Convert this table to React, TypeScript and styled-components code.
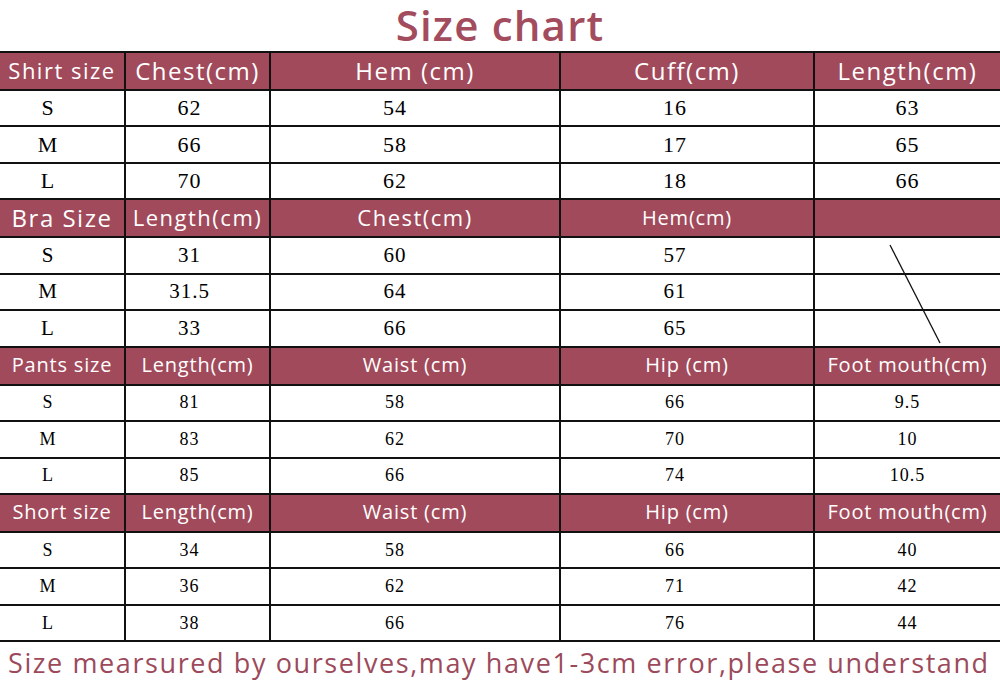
import React from 'react';
import styled, { createGlobalStyle } from 'styled-components';

const MAROON = '#a14a5b';

const GlobalStyle = createGlobalStyle`
  html, body {
    margin: 0;
    padding: 0;
    background: #ffffff;
  }
  body {
    font-family: 'Open Sans', 'Noto Sans', sans-serif;
    overflow: hidden;
  }
`;

const Styled = {
  Page: styled.main`
    width: 1000px;
    height: 700px;
    display: flex;
    flex-direction: column;
    background: #ffffff;
  `,
  Title: styled.h1`
    margin: -4px 0 -2px;
    text-align: center;
    font-family: 'Open Sans', sans-serif;
    font-size: 42px;
    font-weight: 600;
    letter-spacing: 1.2px;
    color: #a34c5e;
    line-height: normal;
  `,
  Table: styled.div`
    position: relative;
    display: flex;
    flex-direction: column;
    gap: 2px;
    padding: 2px 0;
    background: #111111;
  `,
  Section: styled.section`
    position: relative;
    display: grid;
    grid-template-columns: 124px 143px 288px 252px 185px;
    grid-template-rows: 36px repeat(3, 34.45px);
    gap: 2px;
  `,
  HeadCell: styled.div<{ $size: number }>`
    background: ${MAROON};
    color: #ffffff;
    display: flex;
    align-items: center;
    justify-content: center;
    white-space: nowrap;
    font-family: 'Open Sans', sans-serif;
    font-size: ${({ $size }) => $size}px;
    letter-spacing: ${({ $size }) => ($size > 21 ? 1.5 : 0.8)}px;
    padding-bottom: 2px;
  `,
  Cell: styled.div<{ $size: number; $nudge: number }>`
    background: #ffffff;
    color: #000000;
    display: flex;
    align-items: center;
    justify-content: center;
    font-family: 'Liberation Serif', 'DejaVu Serif', serif;
    font-size: ${({ $size }) => $size}px;
    letter-spacing: 1px;
    padding-right: ${({ $nudge }) => $nudge}px;
  `,
  Slash: styled.svg`
    position: absolute;
    left: 815px;
    top: 38px;
    width: 185px;
    height: 108px;
    pointer-events: none;
  `,
  Note: styled.p`
    margin: 0;
    padding: 2px 0 0 8px;
    font-family: 'Open Sans', sans-serif;
    font-size: 27px;
    letter-spacing: 1.6px;
    color: #9c4a5b;
    white-space: nowrap;
  `,
};

// offsets that pull each column's values a little left, as in the chart
const nudges = [28, 16, 40, 24, 0];

type SectionData = {
  title: string;
  heads: string[];
  headSizes: number[];
  rows: string[][];
  dataSize: number;
  slash?: boolean;
};

const sections: SectionData[] = [
  {
    title: 'Shirt size',
    heads: ['Chest(cm)', 'Hem (cm)', 'Cuff(cm)', 'Length(cm)'],
    headSizes: [22, 24, 24, 24, 24],
    rows: [
      ['S', '62', '54', '16', '63'],
      ['M', '66', '58', '17', '65'],
      ['L', '70', '62', '18', '66'],
    ],
    dataSize: 22,
  },
  {
    title: 'Bra Size',
    heads: ['Length(cm)', 'Chest(cm)', 'Hem(cm)', ''],
    headSizes: [24, 22, 22, 20, 20],
    rows: [
      ['S', '31', '60', '57', ''],
      ['M', '31.5', '64', '61', ''],
      ['L', '33', '66', '65', ''],
    ],
    dataSize: 21,
    slash: true,
  },
  {
    title: 'Pants size',
    heads: ['Length(cm)', 'Waist (cm)', 'Hip (cm)', 'Foot mouth(cm)'],
    headSizes: [20, 20, 20, 20, 20],
    rows: [
      ['S', '81', '58', '66', '9.5'],
      ['M', '83', '62', '70', '10'],
      ['L', '85', '66', '74', '10.5'],
    ],
    dataSize: 18,
  },
  {
    title: 'Short size',
    heads: ['Length(cm)', 'Waist (cm)', 'Hip (cm)', 'Foot mouth(cm)'],
    headSizes: [20, 20, 20, 20, 20],
    rows: [
      ['S', '34', '58', '66', '40'],
      ['M', '36', '62', '71', '42'],
      ['L', '38', '66', '76', '44'],
    ],
    dataSize: 18,
  },
];

const SizeSection = ({ data }: { data: SectionData }) => (
  <Styled.Section>
    {[data.title, ...data.heads].map((h, i) => (
      <Styled.HeadCell key={`h${i}`} $size={data.headSizes[i]}>
        {h}
      </Styled.HeadCell>
    ))}
    {data.rows.map((row, r) =>
      row.map((v, c) => (
        <Styled.Cell key={`${r}-${c}`} $size={data.dataSize} $nudge={nudges[c]}>
          {v}
        </Styled.Cell>
      ))
    )}
    {data.slash && (
      <Styled.Slash viewBox="0 0 185 108">
        <line x1="75" y1="7" x2="125" y2="105" stroke="#111" strokeWidth="1.3" />
      </Styled.Slash>
    )}
  </Styled.Section>
);

export default function App() {
  return (
    <Styled.Page>
      <GlobalStyle />
      <Styled.Title>Size chart</Styled.Title>
      <Styled.Table>
        {sections.map((s) => (
          <SizeSection key={s.title} data={s} />
        ))}
      </Styled.Table>
      <Styled.Note>
        Size mearsured by ourselves,may have1-3cm error,please understand
      </Styled.Note>
    </Styled.Page>
  );
}
